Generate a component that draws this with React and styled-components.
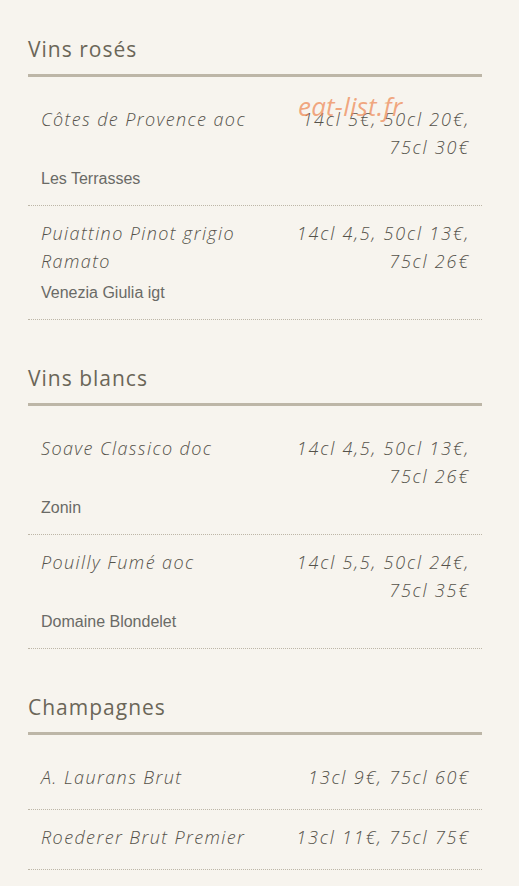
import styled, { createGlobalStyle } from "styled-components";

const GlobalStyle = createGlobalStyle`
    body {
        margin: 0;
        background: #f7f4ee;
    }
`;

const Page = styled.div`
    position: relative;
    padding: 35px 37px 10px 28px;
    font-family: "Open Sans", "DejaVu Sans", sans-serif;
`;

const Section = styled.section`
    margin-bottom: 44px;
`;

const Heading = styled.h2`
    margin: 0;
    padding-bottom: 11px;
    border-bottom: 3px solid #bdb6a7;
    font-size: 21px;
    font-weight: 400;
    line-height: 28px;
    color: #6b6658;
    letter-spacing: 1px;
`;

const List = styled.div`
    padding-top: 15px;
`;

const Item = styled.div`
    padding: 13px 12px ${(p) => (p.$sub ? "17px" : "18px")} 13px;
    border-bottom: 1px dotted #bdb6a7;
`;

const Row = styled.div`
    display: flex;
    justify-content: space-between;
    gap: 16px;
`;

const Name = styled.div`
    flex: 1;
    font-size: 18px;
    font-style: italic;
    font-weight: 300;
    line-height: 28px;
    color: #55524a;
    letter-spacing: 1.4px;
`;

const Price = styled(Name)`
    flex: none;
    max-width: 190px;
    text-align: right;
    letter-spacing: 1.8px;
`;

const Sub = styled.div`
    margin-top: 9px;
    font-family: "Liberation Sans", Arial, sans-serif;
    font-size: 16px;
    line-height: 18px;
    color: #6a6a66;
`;

const Watermark = styled.div`
    position: absolute;
    left: 298px;
    top: 88px;
    font-family: "Open Sans", sans-serif;
    font-style: italic;
    font-size: 26px;
    color: rgba(238, 140, 90, 0.75);
    letter-spacing: 0.2px;
    pointer-events: none;
`;

const menu = [
    {
        title: "Vins rosés",
        items: [
            { name: "Côtes de Provence aoc", price: "14cl 5€, 50cl 20€, 75cl 30€", sub: "Les Terrasses" },
            { name: "Puiattino Pinot grigio Ramato", price: "14cl 4,5, 50cl 13€, 75cl 26€", sub: "Venezia Giulia igt" },
        ],
    },
    {
        title: "Vins blancs",
        items: [
            { name: "Soave Classico doc", price: "14cl 4,5, 50cl 13€, 75cl 26€", sub: "Zonin" },
            { name: "Pouilly Fumé aoc", price: "14cl 5,5, 50cl 24€, 75cl 35€", sub: "Domaine Blondelet" },
        ],
    },
    {
        title: "Champagnes",
        items: [
            { name: "A. Laurans Brut", price: "13cl 9€, 75cl 60€" },
            { name: "Roederer Brut Premier", price: "13cl 11€, 75cl 75€" },
        ],
    },
];

const App = () => {
    return (
        <Page>
            <GlobalStyle />
            {menu.map((section) => (
                <Section key={section.title}>
                    <Heading>{section.title}</Heading>
                    <List>
                        {section.items.map((item) => (
                            <Item key={item.name} $sub={!!item.sub}>
                                <Row>
                                    <Name>{item.name}</Name>
                                    <Price>{item.price}</Price>
                                </Row>
                                {item.sub && <Sub>{item.sub}</Sub>}
                            </Item>
                        ))}
                    </List>
                </Section>
            ))}
            <Watermark>eat-list.fr</Watermark>
        </Page>
    );
};

export default App;
